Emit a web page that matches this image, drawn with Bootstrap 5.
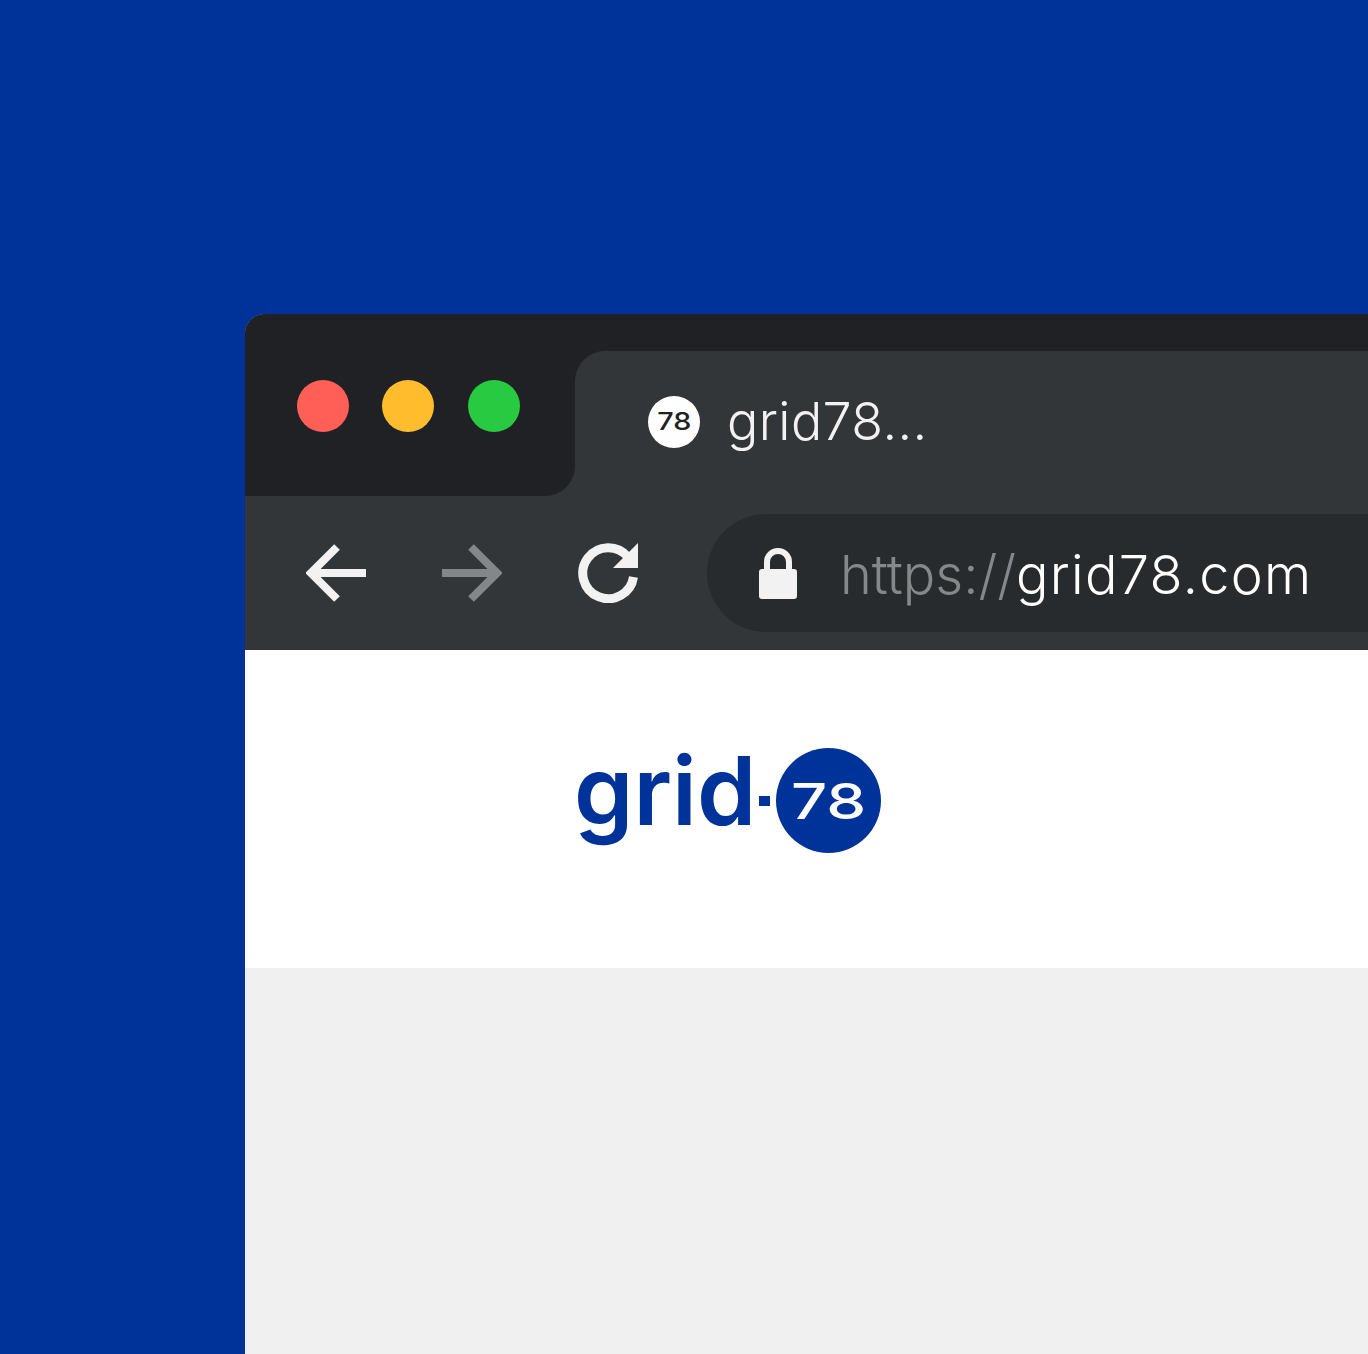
<!DOCTYPE html>
<html lang="en">

<head>
  <meta charset="UTF-8">
  <title>grid78</title>
  <link href="https://cdn.jsdelivr.net/npm/bootstrap@5.3.0/dist/css/bootstrap.min.css" rel="stylesheet">
  <style>
    html, body { height: 1354px; overflow: hidden; }
    body { background: #003399; padding: 314px 0 0 245px; font-family: "Inter", "Liberation Sans", sans-serif; }
    .browser-win { height: 1040px; background: #f0f0f0; border-top-left-radius: 20px; overflow: hidden; }
    .title-row { height: 182px; background: #323639; }
    .dots-area { width: 330px; background: #202124; border-bottom-right-radius: 30px; padding: 66px 0 0 52px; gap: 33px; }
    .dot-btn { width: 52px; height: 52px; }
    .dot-red { background: #ff5f57; }
    .dot-yellow { background: #ffbd2e; }
    .dot-green { background: #28ca42; margin-left: 1px; }
    .tab-area { background: #202124; padding-top: 37px; }
    .tab-shape { background: #323639; border-top-left-radius: 30px; padding: 0 0 3px 73px; gap: 27px; }
    .fav-circle { width: 52px; height: 52px; background: #fff; color: #202124; font-size: 24px; font-weight: 500; line-height: 1; }
    .fav-circle span { transform: scaleX(1.2); }
    .tab-title { color: #f2f2f2; font-size: 52px; font-weight: 300; line-height: 1; letter-spacing: .4px; }
    .tool-row { height: 154px; background: #323639; padding-left: 61px; }
    .nav-icons { gap: 76px; margin-right: 69px; }
    .url-pill { height: 118px; background: #282b2d; border-radius: 59px 0 0 59px; padding-left: 52px; gap: 43px; }
    .url-text { font-size: 54px; font-weight: 300; line-height: 1; letter-spacing: 1.3px; color: #fff; padding-top: 4px; }
    .url-text span { color: #858889; letter-spacing: 0; }
    .head-band { height: 318px; background: #fff; padding: 98px 0 0 333px; }
    .logo-wrap { height: 105px; color: #003399; }
    .logo-word { font-size: 95px; font-weight: 600; line-height: 85px; letter-spacing: 0; height: 105px; margin-left: -4px; }
    .logo-dash { width: 11px; height: 10px; background: #003399; margin: 0 6px 0 3px; }
    .logo-badge { width: 105px; height: 105px; background: #003399; color: #fff; font-size: 50px; font-weight: 500; line-height: 1; }
    .logo-badge span { transform: scaleX(1.27); }
  </style>
</head>

<body>
  <div class="browser-win d-flex flex-column">
    <div class="title-row d-flex">
      <div class="dots-area d-flex flex-shrink-0">
        <div class="dot-btn dot-red rounded-circle"></div>
        <div class="dot-btn dot-yellow rounded-circle"></div>
        <div class="dot-btn dot-green rounded-circle"></div>
      </div>
      <div class="tab-area flex-grow-1 d-flex">
        <div class="tab-shape flex-grow-1 d-flex align-items-center">
          <div class="fav-circle rounded-circle d-flex align-items-center justify-content-center"><span>78</span></div>
          <div class="tab-title">grid78...</div>
        </div>
      </div>
    </div>

    <div class="tool-row d-flex align-items-center">
      <div class="nav-icons d-flex">
        <svg width="60" height="60" viewBox="0 0 60 60" fill="none" stroke="#f2f2f2" stroke-width="8">
          <path d="M60 30H6M31 4L5 30l26 26"/>
        </svg>
        <svg width="60" height="60" viewBox="0 0 60 60" fill="none" stroke="#848789" stroke-width="8">
          <path d="M0 30h54M29 4l26 26-26 26"/>
        </svg>
        <svg width="60" height="60" viewBox="0 0 60 60" fill="none" stroke="#f2f2f2" stroke-width="9">
          <path d="M55.500 34A25.500 25.500 0 1 1 50 14"/>
          <path d="M60 0v25H35z" fill="#f2f2f2" stroke="none"/>
        </svg>
      </div>
      <div class="url-pill flex-grow-1 d-flex align-items-center">
        <svg width="38" height="51" viewBox="0 0 38 51">
          <path d="M8 24V14a11 11 0 0 1 22 0v10" fill="none" stroke="#f2f2f2" stroke-width="6"/>
          <rect y="21" width="38" height="30" rx="3" fill="#f2f2f2"/>
        </svg>
        <div class="url-text"><span>https://</span>grid78.com</div>
      </div>
    </div>

    <div class="head-band">
      <div class="logo-wrap d-flex align-items-center">
        <div class="logo-word">grid</div>
        <div class="logo-dash"></div>
        <div class="logo-badge rounded-circle d-flex align-items-center justify-content-center"><span>78</span></div>
      </div>
    </div>
  </div>

  <script src="https://cdn.jsdelivr.net/npm/bootstrap@5.3.0/dist/js/bootstrap.bundle.min.js"></script>
</body>

</html>
